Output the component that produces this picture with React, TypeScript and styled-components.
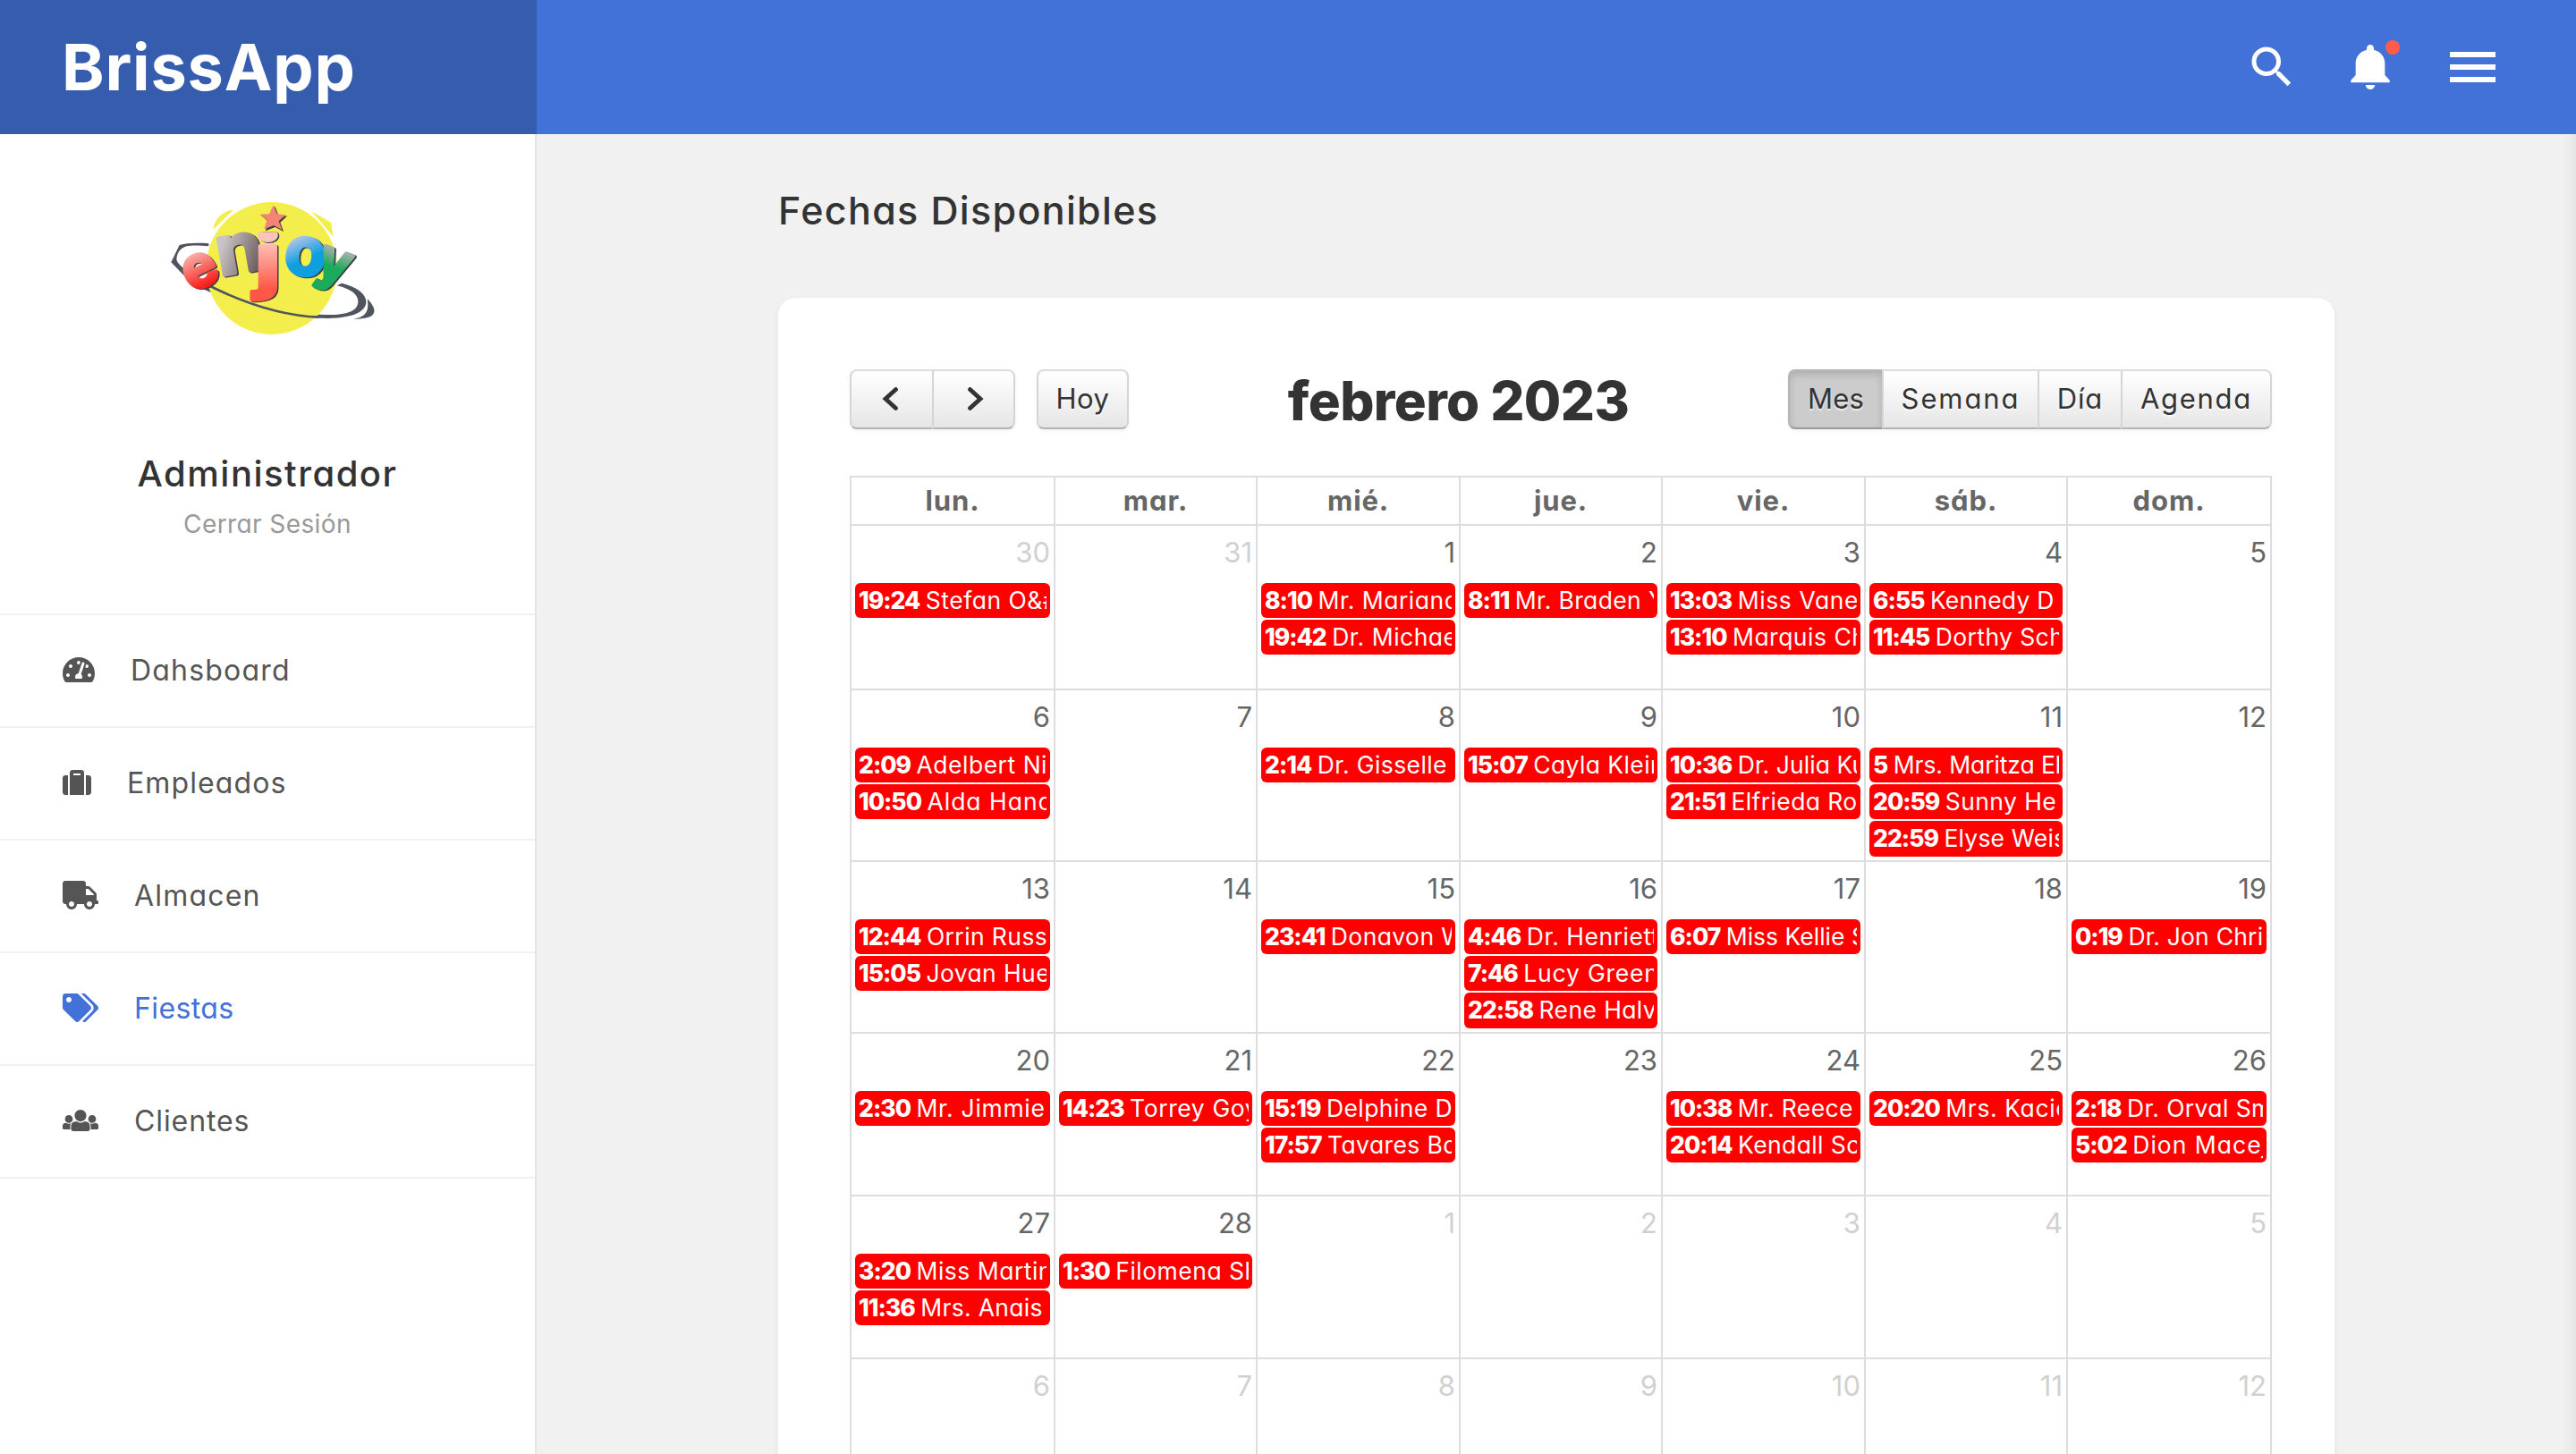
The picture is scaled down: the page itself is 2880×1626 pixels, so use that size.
import React from "react";
import styled, { createGlobalStyle, css } from "styled-components";
import { FaSuitcase, FaTachometerAlt, FaTags, FaTruck } from "react-icons/fa";
import { MdSearch } from "react-icons/md";

const GlobalStyle = createGlobalStyle`
  *, *::before, *::after { box-sizing: border-box; }
  html, body { margin: 0; padding: 0; }
  body {
    background: #f1f1f1;
    color: #333;
    font-family: Inter, "Liberation Sans", sans-serif;
    font-feature-settings: "cv11", "kern";
    overflow: hidden;
  }
`;

const Page = styled.div`
  width: 2880px;
  height: 1626px;
  display: flex;
  flex-direction: column;
  overflow: hidden;
`;

const Header = styled.header`
  display: flex;
  height: 150px;
  flex: none;
  background: #4272d7;
`;

const Brand = styled.div`
  width: 600px;
  padding-left: 69px;
  background: #355cad;
  color: #fff;
  font-size: 72px;
  font-weight: 700;
  line-height: 149px;
  letter-spacing: 0.8px;
`;

const HeaderTools = styled.div`
  flex: 1;
  display: flex;
  align-items: center;
  justify-content: flex-end;
  padding-right: 90px;
  color: #fff;
`;

const ToolIcon = styled.div<{ $gap: number }>`
  display: flex;
  position: relative;
  margin-right: ${(p) => p.$gap}px;
  svg { display: block; }
`;

const AlertDot = styled.span`
  position: absolute;
  top: -5px;
  right: -11px;
  width: 16px;
  height: 16px;
  border-radius: 50%;
  background: #ff5b4a;
`;

const Burger = styled.div`
  width: 51px;
  height: 34px;
  display: flex;
  flex-direction: column;
  justify-content: space-between;
  span { height: 6px; background: #fff; }
`;

const Body = styled.div`
  flex: 1;
  display: flex;
  min-height: 0;
`;

const Sidebar = styled.aside`
  width: 600px;
  flex: none;
  background: #fff;
  border-right: 2px solid #e5e5e5;
`;

const Profile = styled.div`
  height: 536px;
  display: flex;
  flex-direction: column;
  align-items: center;
  padding-top: 60px;
  svg { display: block; margin-left: 12px; }
`;

const UserName = styled.div`
  margin-top: 115px;
  font-size: 40px;
  font-weight: 500;
  line-height: 50px;
  letter-spacing: 1.5px;
`;

const SignOut = styled.div`
  margin-top: 11px;
  font-size: 28px;
  line-height: 40px;
  letter-spacing: 0.4px;
  color: #999;
`;

const Menu = styled.nav`
  border-top: 2px solid #f1f1f1;
`;

const MenuItem = styled.div<{ $active?: boolean }>`
  height: 126px;
  display: flex;
  align-items: center;
  padding-left: 70px;
  gap: 40px;
  border-bottom: 2px solid #f1f1f1;
  color: ${(p) => (p.$active ? "#4272d7" : "#555")};
  font-size: 32px;
  svg { display: block; height: 32px; margin-top: -2px; }
`;

const MenuLabel = styled.span<{ $ls: number }>`
  margin-top: -1px;
  letter-spacing: ${(p) => p.$ls}px;
`;

const Main = styled.main`
  flex: 1;
  display: flex;
  flex-direction: column;
  align-items: center;
  min-width: 0;
  box-shadow: inset -20px 0 20px -20px rgba(0, 0, 0, 0.1);
`;

const PageTitle = styled.h3`
  width: 1740px;
  margin: 60px 0 73px;
  font-size: 43px;
  font-weight: 500;
  line-height: 50px;
  letter-spacing: 1.35px;
`;

const Card = styled.section`
  width: 1740px;
  flex: 1;
  padding: 80px 70px 0 80px;
  background: #fff;
  border-radius: 20px 20px 0 0;
  box-shadow: 0 4px 10px rgba(0, 0, 0, 0.06);
`;

const Toolbar = styled.div`
  display: flex;
  justify-content: space-between;
  align-items: flex-start;
  height: 119px;
`;

const ToolbarSide = styled.div`
  display: flex;
  gap: 24px;
`;

const Month = styled.h2`
  margin: 0;
  font-size: 60px;
  font-weight: 800;
  line-height: 70px;
  letter-spacing: -0.6px;
`;

const ButtonGroup = styled.div`
  display: flex;
  border-radius: 8px;
  box-shadow: 0 2px 4px rgba(0, 0, 0, 0.05);
`;

const CalButton = styled.button<{ $w: number; $ls?: number; $active?: boolean }>`
  width: ${(p) => p.$w}px;
  height: 67px;
  padding: 0 0 2px;
  display: flex;
  align-items: center;
  justify-content: center;
  color: #333;
  font: inherit;
  font-feature-settings: inherit;
  font-size: 31px;
  letter-spacing: ${(p) => p.$ls ?? 0}px;
  white-space: nowrap;
  text-shadow: 0 2px 2px rgba(255, 255, 255, 0.75);
  border: 2px solid;
  border-right-width: 0;
  border-color: #dcdcdc #d5d5d5 #b3b3b3;
  background: linear-gradient(to bottom, #fff, #e6e6e6);
  &:first-child { border-radius: 8px 0 0 8px; }
  &:last-child { border-right-width: 2px; border-radius: 0 8px 8px 0; }
  &:only-child { border-radius: 8px; }
  ${(p) =>
    p.$active &&
    css`
      background: #ccc;
      border-color: #b5b5b5 #b5b5b5 #999;
      box-shadow: inset 0 4px 8px rgba(0, 0, 0, 0.15);
    `}
`;

const GRID = "230px 226px 227px 226px 227px 226px 228px";

const Table = styled.div`
  border-top: 2px solid #ddd;
`;

const HeadRow = styled.div`
  display: grid;
  grid-template-columns: ${GRID};
  height: 54px;
  border-bottom: 2px solid #ddd;
`;

const cellBorders = css`
  border-right: 2px solid #ddd;
  &:first-child { border-left: 2px solid #ddd; }
`;

const HeadCell = styled.div`
  ${cellBorders}
  text-align: center;
  color: #666;
  font-size: 31px;
  font-weight: 700;
  line-height: 51px;
  letter-spacing: 0.9px;
`;

const Week = styled.div<{ $h: number }>`
  display: grid;
  grid-template-columns: ${GRID};
  height: ${(p) => p.$h}px;
  border-bottom: 2px solid #ddd;
`;

const Day = styled.div`
  ${cellBorders}
  min-width: 0;
  padding: 0 4px;
`;

const DayNumber = styled.div<{ $muted?: boolean }>`
  height: 64px;
  padding-top: 6px;
  text-align: right;
  color: #666;
  opacity: ${(p) => (p.$muted ? 0.3 : 1)};
  font-size: 31px;
  line-height: 48px;
`;

const Event = styled.div<{ $tall?: boolean }>`
  height: ${(p) => (p.$tall ? 40 : 39)}px;
  margin-bottom: 2px;
  padding: 0 4px;
  border-radius: 6px;
  background: #f00;
  color: #fff;
`;

const EventText = styled.div`
  overflow: hidden;
  white-space: nowrap;
  font-size: 26.5px;
  line-height: 38px;
`;

const EventTime = styled.span`
  margin-right: -1px;
  font-weight: 800;
  letter-spacing: -1px;
`;

const EventName = styled.span<{ $ls: number }>`
  letter-spacing: ${(p) => p.$ls}px;
`;

const UsersIcon = () => (
  <svg width="40" height="32" viewBox="0 0 640 512" fill="currentColor">
    <path d="M320 64c57.99 0 105 47.01 105 105s-47.01 105-105 105-105-47.01-105-105S262.01 64 320 64zm113.463 217.366l-39.982-9.996c-49.168 35.365-108.766 27.473-146.961 0l-39.982 9.996C174.485 289.379 152 318.177 152 351.216V412c0 19.882 16.118 36 36 36h264c19.882 0 36-16.118 36-36v-60.784c0-33.039-22.485-61.837-54.537-69.85zM528 300c38.66 0 70-31.34 70-70s-31.34-70-70-70-70 31.34-70 70 31.34 70 70 70zm-416 0c38.66 0 70-31.34 70-70s-31.34-70-70-70-70 31.34-70 70 31.34 70 70 70zm24 112v-60.784c0-16.551 4.593-32.204 12.703-45.599-29.988 14.72-63.336 8.708-85.69-7.37l-26.655 6.664C14.99 310.252 0 329.452 0 351.477V392c0 13.255 10.745 24 24 24h112.169a52.417 52.417 0 0 1-.169-4zm467.642-107.09l-26.655-6.664c-27.925 20.086-60.89 19.233-85.786 7.218C499.369 318.893 504 334.601 504 351.216V412c0 1.347-.068 2.678-.169 4H616c13.255 0 24-10.745 24-24v-40.523c0-22.025-14.99-41.225-36.358-46.567z" />
  </svg>
);

const BellIcon = () => (
  <svg width="44" height="50" viewBox="0 0 132 150" fill="currentColor">
    <path d="M66 0c-6.600 0-12 5-12 12v5C32 23 17 39 17 62v40L1 119v8h130v-8l-16-17V62c0-23-15-39-37-45v-5C78 5 72.600 0 66 0z" />
    <path d="M50 135h32c-2 10-8 15-16 15s-14-5-16-15z" />
  </svg>
);

const Arrow = styled.svg<{ $dx: number }>`
  display: block;
  transform: translateX(${(p) => p.$dx}px);
`;

const Chevron = ({ flip }: { flip?: boolean }) => (
  <Arrow $dx={flip ? 2 : -2} width="18" height="26" viewBox="0 0 18 26">
    <path
      d={flip ? "M2.500 2.500L14 13 2.500 23.500" : "M15.500 2.500L4 13l11.500 10.500"}
      fill="none"
      stroke="#333"
      strokeWidth="4.800"
      strokeLinecap="round"
    />
  </Arrow>
);

type Glyph = { ch: string; x: number; y: number; size: number; rot: number; fill: string; sx?: number; clip?: string };

const glyphs: Glyph[] = [
  { ch: "n", x: 305, y: 282, size: 228, rot: -10, fill: "url(#gn)", sx: 1.1 },
  { ch: "e", x: 184, y: 326, size: 196, rot: -26, fill: "url(#ge)", sx: 0.98 },
  { ch: "j", x: 388, y: 326, size: 240, rot: 0, fill: "url(#gj)", sx: 1.35, clip: "url(#jclip)" },
  { ch: "o", x: 508, y: 292, size: 226, rot: 6, fill: "url(#go)", sx: 1 },
  { ch: "y", x: 594, y: 308, size: 186, rot: 20, fill: "url(#gy)", sx: 0.95 },
];

const Logo = () => (
  <svg width="270" height="180" viewBox="0 0 810 540">
    <defs>
      <linearGradient id="ge" x1="0" y1="0" x2="0" y2="1">
        <stop offset="0.300" stopColor="#f9b5ae" />
        <stop offset="0.800" stopColor="#fb1d18" />
      </linearGradient>
      <linearGradient id="gn" x1="0" y1="0" x2="1" y2="1">
        <stop offset="0.300" stopColor="#c9c3c3" />
        <stop offset="0.800" stopColor="#6f5f60" />
      </linearGradient>
      <linearGradient id="gj" x1="0" y1="0" x2="0" y2="1">
        <stop offset="0.300" stopColor="#ffc3bd" />
        <stop offset="0.850" stopColor="#ff5745" />
      </linearGradient>
      <linearGradient id="go" x1="0" y1="0" x2="0.300" y2="1">
        <stop offset="0.400" stopColor="#adc3ea" />
        <stop offset="0.700" stopColor="#0f9fe0" />
      </linearGradient>
      <linearGradient id="gy" x1="0" y1="0" x2="0" y2="1">
        <stop offset="0.350" stopColor="#9fb0a4" />
        <stop offset="0.600" stopColor="#1aab5c" />
      </linearGradient>
      <clipPath id="jclip">
        <rect x="300" y="149" width="160" height="260" rx="26" />
      </clipPath>
    </defs>
    <path
      d="M190 187C150 184 115 186 92 192L64 250 130 318C260 390 440 436 590 438c90-2 130-25 128-58-2-24-30-48-82-60l-16 8c50 12 72 32 71 55-2 32-40 44-108 43C450 424 280 376 160 308 120 284 84 256 82 240c2-24 14-38 34-44 20-4 40-3 74 0z"
      fill="#50545f"
    />
    <path d="M722 372c20 22 32 42 16 56-10 8-36 12-62 12 36-6 54-20 46-68z" fill="#50545f" />
    <path d="M205 140c4-36 34-64 68-66z M534 78l66 38 8 48z" fill="#f4ee4c" />
    <ellipse cx="401" cy="270" rx="220" ry="222" fill="#f4ee4c" />
    <path d="M195 330C320 392 450 430 560 434" fill="none" stroke="#50545f" strokeWidth="8" />
    <path d="M412 62l12 30 29 3-23 21 11 31-28-15-33 13 11-31-25-21 32-2z" fill="#3e3e48" />
    <path d="M407 58l12 30 29 3-23 21 11 29-28-15-33 13 11-31-25-19 32-1z" fill="#f58476" />
    {glyphs.map((g) => (
      <g key={g.ch} clipPath={g.clip}>
        {[5, 0].map((d) => (
          <text
            key={d}
            transform={`translate(${g.x + d} ${g.y + d * 0.6}) rotate(${g.rot}) scale(${g.sx} 1)`}
            textAnchor="middle"
            fontFamily="Inter, sans-serif"
            fontWeight="700"
            fontSize={g.size}
            fill={d ? "#3e3e48" : g.fill}
            stroke={d ? "#3e3e48" : g.fill}
            strokeWidth="12"
            strokeLinejoin="round"
            aria-hidden={d ? true : undefined}
          >
            {g.ch}
          </text>
        ))}
      </g>
    ))}
  </svg>
);

type Ev = [time: string, name: string, ls?: number];
type DayData = { n: number; out?: boolean; ev?: Ev[] };

const d = (n: number, ...ev: Ev[]): DayData => ({ n, ev });
const o = (n: number, ...ev: Ev[]): DayData => ({ n, out: true, ev });

const weeks: { h: number; days: DayData[] }[] = [
  {
    h: 184,
    days: [
      o(30, ["19:24", "Stefan O&#", 0.5]),
      o(31),
      d(1, ["8:10", "Mr. Mariano", 0.5], ["19:42", "Dr. Michael", 0.5]),
      d(2, ["8:11", "Mr. Braden Y", 0.35]),
      d(3, ["13:03", "Miss Vane", 0.6], ["13:10", "Marquis Ch", 0.5]),
      d(4, ["6:55", "Kennedy D", 0.2], ["11:45", "Dorthy Sch"]),
      d(5),
    ],
  },
  {
    h: 192,
    days: [
      d(6, ["2:09", "Adelbert Ni", 0.5], ["10:50", "Alda Hand", 1]),
      d(7),
      d(8, ["2:14", "Dr. Gisselle"]),
      d(9, ["15:07", "Cayla Klein"]),
      d(10, ["10:36", "Dr. Julia Ku", 0.1], ["21:51", "Elfrieda Ro"]),
      d(11, ["5", "Mrs. Maritza Eb", -0.1], ["20:59", "Sunny He"], ["22:59", "Elyse Weis", 0.2]),
      d(12),
    ],
  },
  {
    h: 192,
    days: [
      d(13, ["12:44", "Orrin Russ"], ["15:05", "Jovan Hue"]),
      d(14),
      d(15, ["23:41", "Donavon W"]),
      d(16, ["4:46", "Dr. Henriett", 0.5], ["7:46", "Lucy Green", 0.8], ["22:58", "Rene Halv"]),
      d(17, ["6:07", "Miss Kellie S", 0]),
      d(18),
      d(19, ["0:19", "Dr. Jon Chri", 0.2]),
    ],
  },
  {
    h: 182,
    days: [
      d(20, ["2:30", "Mr. Jimmie", 0.7]),
      d(21, ["14:23", "Torrey Goy", 0.6]),
      d(22, ["15:19", "Delphine D"], ["17:57", "Tavares Ba"]),
      d(23),
      d(24, ["10:38", "Mr. Reece"], ["20:14", "Kendall Sc"]),
      d(25, ["20:20", "Mrs. Kacie", 0.6]),
      d(26, ["2:18", "Dr. Orval Sm"], ["5:02", "Dion Macej", 1]),
    ],
  },
  {
    h: 182,
    days: [
      d(27, ["3:20", "Miss Martin", 0.5], ["11:36", "Mrs. Anais H", 0.3]),
      d(28, ["1:30", "Filomena Sh", 0.5]),
      o(1),
      o(2),
      o(3),
      o(4),
      o(5),
    ],
  },
  { h: 182, days: [o(6), o(7), o(8), o(9), o(10), o(11), o(12)] },
];

const heads = ["lun.", "mar.", "mié.", "jue.", "vie.", "sáb.", "dom."];

const menu = [
  { label: "Dahsboard", icon: <FaTachometerAlt size={36} />, ls: 1.2 },
  { label: "Empleados", icon: <FaSuitcase size={32} />, ls: 1.1 },
  { label: "Almacen", icon: <FaTruck size={40} />, ls: 1.2 },
  { label: "Fiestas", icon: <FaTags size={40} />, ls: 0.4, active: true },
  { label: "Clientes", icon: <UsersIcon />, ls: 0.9 },
];

export default function App() {
  return (
    <Page>
      <GlobalStyle />
      <Header>
        <Brand>BrissApp</Brand>
        <HeaderTools>
          <ToolIcon $gap={58}>
            <MdSearch size={60} />
          </ToolIcon>
          <ToolIcon $gap={67}>
            <BellIcon />
            <AlertDot />
          </ToolIcon>
          <Burger>
            <span />
            <span />
            <span />
          </Burger>
        </HeaderTools>
      </Header>
      <Body>
        <Sidebar>
          <Profile>
            <Logo />
            <UserName>Administrador</UserName>
            <SignOut>Cerrar Sesión</SignOut>
          </Profile>
          <Menu>
            {menu.map((m) => (
              <MenuItem key={m.label} $active={m.active}>
                {m.icon}
                <MenuLabel $ls={m.ls}>{m.label}</MenuLabel>
              </MenuItem>
            ))}
          </Menu>
        </Sidebar>
        <Main>
          <PageTitle>Fechas Disponibles</PageTitle>
          <Card>
            <Toolbar>
              <ToolbarSide>
                <ButtonGroup>
                  <CalButton $w={92}>
                    <Chevron />
                  </CalButton>
                  <CalButton $w={93}>
                    <Chevron flip />
                  </CalButton>
                </ButtonGroup>
                <ButtonGroup>
                  <CalButton $w={103} $ls={0.6}>Hoy</CalButton>
                </ButtonGroup>
              </ToolbarSide>
              <Month>febrero 2023</Month>
              <ToolbarSide>
                <ButtonGroup>
                  <CalButton $w={105} $ls={0.2} $active>
                    Mes
                  </CalButton>
                  <CalButton $w={174} $ls={1.9}>Semana</CalButton>
                  <CalButton $w={93} $ls={0.8}>Día</CalButton>
                  <CalButton $w={169} $ls={1.7}>Agenda</CalButton>
                </ButtonGroup>
              </ToolbarSide>
            </Toolbar>
            <Table>
              <HeadRow>
                {heads.map((h) => (
                  <HeadCell key={h}>{h}</HeadCell>
                ))}
              </HeadRow>
              {weeks.map((w, i) => (
                <Week key={i} $h={w.h}>
                  {w.days.map((day) => (
                    <Day key={day.n}>
                      <DayNumber $muted={day.out}>{day.n}</DayNumber>
                      {(day.ev ?? []).map(([time, name, ls], k) => (
                        <Event key={time} $tall={k === 2}>
                          <EventText>
                            <EventTime>{time}</EventTime> <EventName $ls={ls ?? 0.4}>{name}</EventName>
                          </EventText>
                        </Event>
                      ))}
                    </Day>
                  ))}
                </Week>
              ))}
            </Table>
          </Card>
        </Main>
      </Body>
    </Page>
  );
}
